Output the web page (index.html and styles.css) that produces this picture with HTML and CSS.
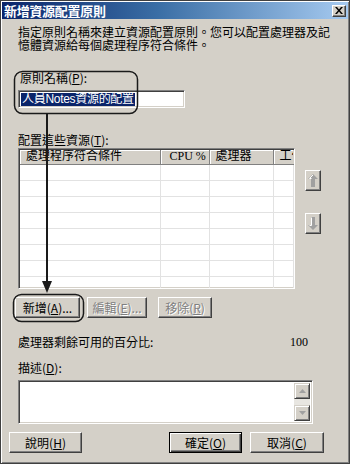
FILE: index.html
```html
<!DOCTYPE html>
<html lang="zh-Hant">
<head>
    <meta charset="UTF-8">
    <meta name="viewport" content="width=device-width, initial-scale=1.0">
    <title>新增資源配置原則</title>
    <link rel="stylesheet" href="styles.css">
</head>
<body>
    <div class="dialog">
        <div class="titlebar">
            <span class="title">新增資源配置原則</span>
            <span class="close">
                <svg width="8" height="7" viewBox="0 0 8 7"><path d="M0 0h2l2 2.5L6 0h2L5 3.5 8 7H6L4 4.5 2 7H0l3-3.5z" fill="#000"/></svg>
            </span>
        </div>

        <div class="content">
            <p class="intro">指定原則名稱來建立資源配置原則。您可以配置處理器及記<br>憶體資源給每個處理程序符合條件。</p>

            <div class="label name-label">原則名稱(<u>P</u>):</div>
            <div class="field"><span class="selected">人員Notes資源的配置</span></div>

            <div class="label list-label">配置這些資源(<u>T</u>):</div>
            <div class="list-row">
                <div class="listview">
                    <table>
                        <thead>
                            <tr>
                                <th class="c1">處理程序符合條件</th>
                                <th class="c2">CPU %</th>
                                <th class="c3">處理器</th>
                                <th class="c4">工作</th>
                            </tr>
                        </thead>
                        <tbody>
                            <tr><td></td><td></td><td></td><td></td></tr>
                            <tr><td></td><td></td><td></td><td></td></tr>
                            <tr><td></td><td></td><td></td><td></td></tr>
                            <tr><td></td><td></td><td></td><td></td></tr>
                            <tr><td></td><td></td><td></td><td></td></tr>
                            <tr><td></td><td></td><td></td><td></td></tr>
                            <tr><td></td><td></td><td></td><td></td></tr>
                            <tr><td></td><td></td><td></td><td></td></tr>
                        </tbody>
                    </table>
                </div>
                <div class="move-buttons">
                    <div class="move">
                        <svg width="10" height="13" viewBox="0 0 10 13"><path d="M5 0L10 5H7V13H3V5H0z" fill="#a0a0a0"/><path d="M5 1L1.5 4.5H3.5" stroke="#fff" fill="none"/></svg>
                    </div>
                    <div class="move">
                        <svg width="10" height="13" viewBox="0 0 10 13"><path d="M5 13L10 8H7V0H3V8H0z" fill="#a0a0a0"/><path d="M3.5 0.5V8.5H1.5" stroke="#fff" fill="none"/></svg>
                    </div>
                </div>
            </div>

            <div class="action-row">
                <button class="btn add">新增(<u>A</u>)...</button>
                <button class="btn edit" disabled>編輯(<u>E</u>)...</button>
                <button class="btn remove" disabled>移除(<u>R</u>)</button>
            </div>

            <div class="stat-row">
                <span>處理器剩餘可用的百分比:</span>
                <span class="stat-value">100</span>
            </div>

            <div class="label desc-label">描述(<u>D</u>):</div>
            <div class="memo">
                <div class="memo-text"></div>
                <div class="scrollbar">
                    <div class="sb-btn">
                        <svg width="7" height="4" viewBox="0 0 7 4"><path d="M3.5 0L7 4H0z" fill="#a0a0a0"/></svg>
                    </div>
                    <div class="sb-track"></div>
                    <div class="sb-btn">
                        <svg width="7" height="4" viewBox="0 0 7 4"><path d="M0 0H7L3.5 4z" fill="#a0a0a0"/></svg>
                    </div>
                </div>
            </div>
        </div>

        <div class="footer">
            <button class="btn help">說明(<u>H</u>)</button>
            <div class="footer-right">
                <button class="btn ok">確定(<u>O</u>)</button>
                <button class="btn cancel">取消(<u>C</u>)</button>
            </div>
        </div>

        <!-- annotation marks drawn over the dialog -->
        <svg class="callouts" width="350" height="464" viewBox="0 0 350 464">
            <rect x="13.5" y="70.5" width="123" height="42" rx="8" fill="none" stroke="#1a1a1a" stroke-width="1.5"/>
            <rect x="12.5" y="293.5" width="70" height="27" rx="8" fill="none" stroke="#1a1a1a" stroke-width="1.5"/>
            <line x1="46" y1="113" x2="46" y2="283" stroke="#1a1a1a" stroke-width="2"/>
            <path d="M41 280H51L46 292z" fill="#1a1a1a"/>
        </svg>
    </div>
</body>
</html>
```

FILE: styles.css
```css
*{
    padding: 0;
    margin: 0;
    box-sizing: border-box;
}
body
{
    overflow: hidden;
    background: #fff;
    font-family: "Liberation Serif", "Noto Sans CJK TC", serif;
    font-size: 12px;
    color: #000;
}
u
{
    text-decoration: underline;
}

.dialog
{
    position: relative;
    width: 350px;
    height: 464px;
    background-color: #d4d0c8;
    border: 1px solid #404040;
    padding: 1px;
    box-shadow: inset 1px 1px #ffffff, inset -1px -1px #808080;
    display: flex;
    flex-direction: column;
}

.titlebar
{
    height: 17px;
    background: linear-gradient(90deg, #0a246a 0%, #3a6ea5 45%, #a6caf0 100%);
    display: flex;
    align-items: center;
    justify-content: space-between;
    padding: 0 2px 0 2px;
}
.title
{
    color: #fff;
    font-family: "Noto Sans CJK TC", sans-serif;
    font-weight: 700;
    font-size: 13px;
    line-height: 13px;
    letter-spacing: -0.3px;
}
.close
{
    width: 14px;
    height: 12px;
    background-color: #d4d0c8;
    border: 1px solid;
    border-color: #fff #404040 #404040 #fff;
    box-shadow: inset -1px -1px #808080;
    display: flex;
    align-items: center;
    justify-content: center;
}

.content
{
    padding: 0 0 0 16px;
}
.intro
{
    margin-top: 6px;
    line-height: 13px;
    font-family: "Noto Sans CJK TC", sans-serif;
    white-space: nowrap;
}
.label
{
    line-height: 12px;
    height: 12px;
    font-family: "Noto Sans CJK TC", sans-serif;
}
.name-label
{
    margin-top: 21px;
    padding-left: 2px;
}
.field
{
    margin-top: 6px;
    width: 167px;
    height: 18px;
    background: #fff;
    border: 1px solid;
    border-color: #808080 #fff #fff #808080;
    box-shadow: inset 1px 1px #404040, inset -1px -1px #d4d0c8;
    padding: 2px 0 0 2px;
    line-height: 13px;
}
.selected
{
    display: inline-block;
    background: #0a246a;
    color: #fff;
    height: 13px;
    padding: 0 1px;
    font-family: "Liberation Sans", "Noto Sans CJK TC", sans-serif;
    letter-spacing: -0.3px;
}

.list-label
{
    margin-top: 26px;
}
.list-row
{
    margin-top: 2px;
    display: flex;
    gap: 10px;
}
.listview
{
    width: 277px;
    height: 141px;
    background: #fff;
    border: 1px solid;
    border-color: #808080 #fff #fff #808080;
    box-shadow: inset 1px 1px #404040, inset -1px -1px #d4d0c8;
    padding: 1px;
    overflow: hidden;
}
.listview table
{
    border-collapse: collapse;
    table-layout: fixed;
    width: 273px;
}
.listview th
{
    height: 14px;
    font-weight: normal;
    text-align: left;
    background: #d4d0c8;
    border-right: 1px solid #808080;
    border-bottom: 1px solid #808080;
    box-shadow: inset 1px 1px #fff;
    padding: 0 0 0 6px;
    line-height: 13px;
    white-space: nowrap;
    overflow: hidden;
}
.listview .c1
{
    width: 140px;
}
.listview .c2
{
    width: 49px;
    padding-left: 9px;
}
.listview .c3
{
    width: 64px;
}
.listview .c4
{
    width: 20px;
    border-right: none;
}
.listview td
{
    height: 16px;
    border-right: 1px solid #e2e2e2;
    border-bottom: 1px solid #e2e2e2;
}

.move-buttons
{
    display: flex;
    flex-direction: column;
    gap: 22px;
    padding-top: 22px;
}
.move
{
    width: 16px;
    height: 21px;
    background-color: #d4d0c8;
    border: 1px solid;
    border-color: #fff #404040 #404040 #fff;
    box-shadow: inset -1px -1px #808080;
    display: flex;
    align-items: center;
    justify-content: center;
}

.btn
{
    height: 21px;
    background-color: #d4d0c8;
    border: 1px solid;
    border-color: #fff #404040 #404040 #fff;
    box-shadow: inset -1px -1px #808080;
    font-family: "Noto Sans CJK TC", sans-serif;
    font-size: 12px;
    line-height: 12px;
    color: #000;
}
.btn:disabled
{
    color: #808080;
    text-shadow: 1px 1px #fff;
}
.action-row
{
    margin-top: 8px;
    margin-left: -3px;
    display: flex;
}
.add
{
    width: 65px;
}
.edit
{
    width: 60px;
    margin-left: 7px;
}
.remove
{
    width: 54px;
    margin-left: 11px;
}

.stat-row
{
    margin-top: 18px;
    height: 12px;
    line-height: 12px;
    width: 290px;
    display: flex;
    justify-content: space-between;
    font-family: "Noto Sans CJK TC", sans-serif;
}
.stat-value
{
    font-family: "Liberation Serif", serif;
}

.desc-label
{
    margin-top: 14px;
}
.memo
{
    margin-top: 6px;
    width: 295px;
    height: 44px;
    background: #fff;
    border: 1px solid;
    border-color: #808080 #fff #fff #808080;
    box-shadow: inset 1px 1px #404040, inset -1px -1px #d4d0c8;
    padding: 2px;
    display: flex;
}
.memo-text
{
    flex: 1;
}
.scrollbar
{
    width: 16px;
    display: flex;
    flex-direction: column;
}
.sb-btn
{
    width: 16px;
    height: 16px;
    background-color: #d4d0c8;
    border: 1px solid;
    border-color: #d4d0c8 #404040 #404040 #d4d0c8;
    box-shadow: inset 1px 1px #fff, inset -1px -1px #808080;
    display: flex;
    align-items: center;
    justify-content: center;
}
.sb-track
{
    flex: 1;
    background-color: #e8e6e1;
}

.footer
{
    margin-top: 8px;
    padding: 0 24px 0 7px;
    display: flex;
    justify-content: space-between;
}
.footer-right
{
    display: flex;
    gap: 8px;
}
.help
{
    width: 73px;
}
.ok
{
    width: 73px;
    border: 1px solid #000;
    box-shadow: inset 1px 1px #fff, inset -1px -1px #404040, inset -2px -2px #808080;
}
.cancel
{
    width: 74px;
}

.callouts
{
    position: absolute;
    left: 0;
    top: 0;
    pointer-events: none;
}
```
